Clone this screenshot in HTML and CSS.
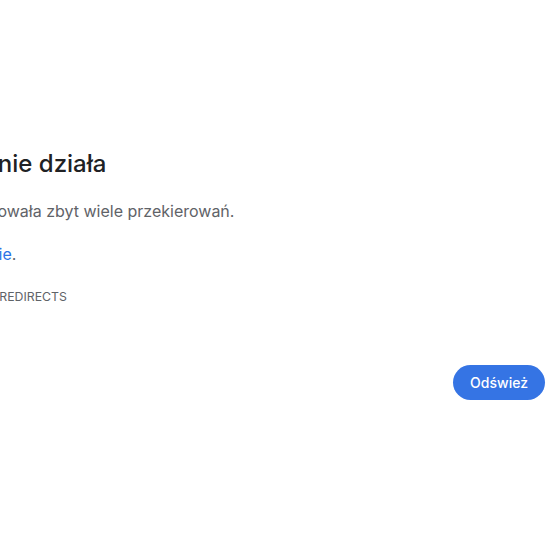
FILE: index.html
```html
<!DOCTYPE html>
<html lang="pl">
<head>
<meta charset="utf-8">
<title>Ta strona nie działa</title>
<link rel="stylesheet" href="styles.css">
</head>
<body>
<div class="page">
  <main class="content">
    <h1 class="title">Ta strona nie działa</h1>
    <p class="summary">Witryna zastosowała zbyt wiele przekierowań.</p>
    <p class="suggestion"><a class="link" href="#">Usuń pliki cookie</a>.</p>
    <div class="code">ERR_TOO_MANY_REDIRECTS</div>
    <div class="actions">
      <button class="reload" type="button">Odśwież</button>
    </div>
  </main>
</div>
</body>
</html>
```

FILE: styles.css
```css
html, body {
  margin: 0;
  padding: 0;
  background: #ffffff;
  overflow: hidden;
}

body {
  width: 555px;
  height: 555px;
  font-family: "Inter", "Liberation Sans", sans-serif;
  color: #5f6368;
}

.page {
  padding-top: 149px;
}

.content {
  margin-left: -115px;
  width: 660px;
}

.title {
  margin: 0;
  font-size: 24px;
  line-height: 30px;
  font-weight: 500;
  color: #202124;
}

.summary,
.suggestion {
  margin: 0;
  font-size: 16px;
  line-height: 24px;
  color: #5f6368;
}

.summary {
  margin-top: 20px;
  margin-bottom: 19px;
}

.suggestion {
  margin-left: -2px;
}

.link {
  color: #2b74e6;
  text-decoration: none;
}

.code {
  margin-top: 19px;
  padding-left: 11px;
  font-size: 12.3px;
  line-height: 24px;
  text-transform: uppercase;
  color: #5f6368;
}

.actions {
  display: flex;
  justify-content: flex-end;
  margin-top: 56px;
}

.reload {
  box-sizing: border-box;
  height: 35px;
  font-family: "Inter", "Liberation Sans", sans-serif;
  font-size: 14px;
  font-weight: 500;
  line-height: 19px;
  padding: 0 17px;
  border: none;
  border-radius: 18px;
  background: #3574e4;
  color: #ffffff;
}
```
